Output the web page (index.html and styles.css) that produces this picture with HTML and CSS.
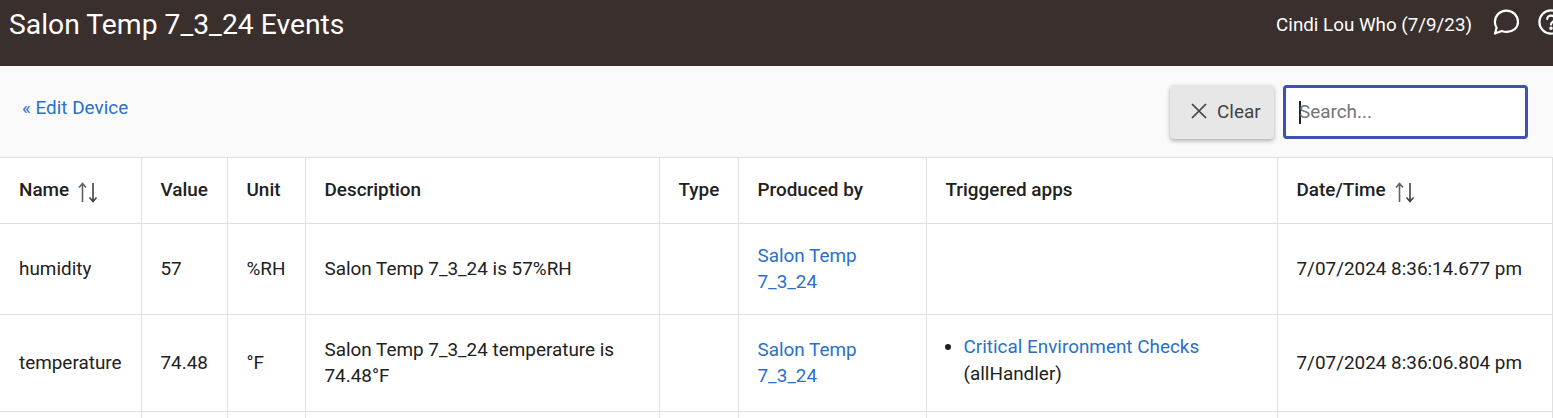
FILE: index.html
```html
<!DOCTYPE html>
<html lang="en">
<head>
<meta charset="utf-8">
<title>Salon Temp 7_3_24 Events</title>
<link rel="stylesheet" href="styles.css">
</head>
<body>
<header class="topbar">
  <h1 class="title">Salon Temp 7_3_24 Events</h1>
  <div class="user">
    <span class="user-name">Cindi Lou Who (7/9/23)</span>
    <svg class="icon-chat" viewBox="0 0 28 28" width="28" height="28" fill="none" stroke="currentColor" stroke-width="2.2" stroke-linejoin="round" stroke-linecap="round"><path d="M3 25.5 L4.6 19.6 C3.4 17.8 2.9 16 2.9 14 C2.9 7.6 8 2.6 14.4 2.6 C20.8 2.6 26 7.6 26 14 C26 20.2 20.8 23.6 15.2 23.9 C13.4 24 11.4 23.6 9.8 23 Z"/></svg>
    <svg class="icon-help" viewBox="0 0 28 28" width="28" height="28" fill="none" stroke="currentColor" stroke-width="2.2" stroke-linecap="round"><circle cx="14" cy="14" r="11.6"/><path d="M10.2 11 C10.2 8.8 12 7.6 14 7.6 C16.2 7.6 17.8 9 17.8 11 C17.8 13.6 14 13.8 14 16.6"/><circle cx="14" cy="20.2" r="0.7" fill="currentColor"/></svg>
  </div>
</header>
<section class="toolbar">
  <a class="back-link" href="#">« Edit Device</a>
  <div class="tools">
    <button class="clear-btn" type="button">
      <svg viewBox="0 0 18 18" width="18" height="18" fill="none" stroke="currentColor" stroke-width="1.7"><path d="M2 2 L16 16 M16 2 L2 16"/></svg>
      <span>Clear</span>
    </button>
    <div class="search"><span class="caret"></span><span class="placeholder">Search...</span></div>
  </div>
</section>
<table class="events">
  <colgroup>
    <col class="c-name"><col class="c-value"><col class="c-unit"><col class="c-desc"><col class="c-type"><col class="c-prod"><col class="c-trig"><col class="c-date">
  </colgroup>
  <thead>
    <tr>
      <th><span class="sort">Name <svg class="sort-icon" viewBox="0 0 22 22" width="22" height="22" fill="none" stroke-width="1.6"><path class="up" d="M5.5 21 V2.5 M2 6.5 L5.5 2.5 L9 6.5"/><path class="down" d="M16 2 V20.5 M12.5 16.5 L16 20.5 L19.5 16.5"/></svg></span></th>
      <th>Value</th>
      <th>Unit</th>
      <th>Description</th>
      <th>Type</th>
      <th>Produced by</th>
      <th>Triggered apps</th>
      <th><span class="sort">Date/Time <svg class="sort-icon" viewBox="0 0 22 22" width="22" height="22" fill="none" stroke-width="1.6"><path class="up" d="M5.5 21 V2.5 M2 6.5 L5.5 2.5 L9 6.5"/><path class="down" d="M16 2 V20.5 M12.5 16.5 L16 20.5 L19.5 16.5"/></svg></span></th>
    </tr>
  </thead>
  <tbody>
    <tr class="row-a">
      <td>humidity</td>
      <td>57</td>
      <td>%RH</td>
      <td>Salon Temp 7_3_24 is 57%RH</td>
      <td></td>
      <td><a href="#">Salon Temp 7_3_24</a></td>
      <td></td>
      <td>7/07/2024 8:36:14.677 pm</td>
    </tr>
    <tr class="row-b">
      <td>temperature</td>
      <td>74.48</td>
      <td>°F</td>
      <td>Salon Temp 7_3_24 temperature is 74.48°F</td>
      <td></td>
      <td><a href="#">Salon Temp 7_3_24</a></td>
      <td><ul class="apps"><li><a href="#">Critical Environment Checks</a> (allHandler)</li></ul></td>
      <td>7/07/2024 8:36:06.804 pm</td>
    </tr>
    <tr class="row-c">
      <td></td><td></td><td></td><td></td><td></td><td></td><td></td><td></td>
    </tr>
  </tbody>
</table>
</body>
</html>
```
FILE: styles.css
```css
* { box-sizing: border-box; }
html, body { margin: 0; padding: 0; height: 418px; overflow: hidden; }
body { background: #fff; font-family: Roboto, sans-serif; font-size: 18.9px; line-height: 26.4px; color: #212121; }
a { color: #2a70c8; text-decoration: none; }

.topbar { height: 66px; background: #392f2d; color: #fff; display: flex; align-items: flex-start; justify-content: space-between; overflow: hidden; }
.title { margin: 7px 0 0 9px; font-size: 28.3px; line-height: 36px; font-weight: 400; }
.user { display: flex; align-items: center; flex-shrink: 0; margin-top: 8px; margin-right: -12px; height: 28px; }
.user-name { font-size: 18.8px; margin-right: 20px; margin-top: 6px; }
.icon-chat { margin-right: 17px; }

.toolbar { height: 91px; background: #fafafa; display: flex; justify-content: space-between; align-items: flex-start; padding: 29px 25px 0 22px; }
.back-link { display: block; }
.tools { display: flex; gap: 9px; margin-top: -10px; }
.clear-btn { width: 104px; height: 54px; display: flex; align-items: center; gap: 9px; padding: 0 0 2px 20px; border: 0; border-radius: 4px; background: #e7e7e7; color: #424242; font: 400 18.9px Roboto, sans-serif; box-shadow: 0 2px 4px rgba(0,0,0,.3); }
.search { width: 245px; height: 54px; background: #fff; border: 3px solid #3f51b5; border-radius: 4px; display: flex; align-items: center; padding-left: 13px; color: #757575; }
.caret { width: 2px; height: 23px; background: #212121; margin-right: -2px; }

.events { width: 1552px; table-layout: fixed; border-collapse: collapse; border-top: 1px solid #e0e0e0; }
.c-name { width: 141px; } .c-value { width: 86px; } .c-unit { width: 78px; } .c-desc { width: 354px; }
.c-type { width: 79px; } .c-prod { width: 188px; } .c-trig { width: 351px; } .c-date { width: 275px; }
th, td { border: 1px solid #e0e0e0; padding: 0 19px; text-align: left; vertical-align: middle; }
th:first-child, td:first-child { border-left: 0; }
th { height: 66px; font-weight: 500; color: #212121; }
.sort { display: inline-flex; align-items: center; gap: 8px; }
.sort-icon { margin-top: 2px; }
.up { stroke: #616161; }
.down { stroke: #424242; }
.row-a td { height: 91px; }
.row-b td { height: 97px; }
.row-c td { height: 6px; border-bottom: 0; }
.apps { margin: 0; padding: 0 0 6px 18px; line-height: 27px; }
```
